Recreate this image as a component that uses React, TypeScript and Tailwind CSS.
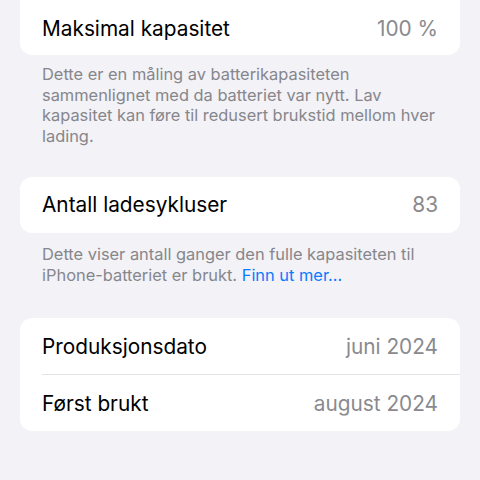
export default function App() {
  return (
    <div
      className="w-[480px] h-[480px] overflow-hidden bg-[#f2f2f7] px-5"
      style={{ fontFamily: 'Inter, "Noto Sans", sans-serif' }}
    >
      {/* Maksimal kapasitet */}
      <div className="h-[55px] rounded-b-xl bg-white flex items-center justify-between px-[22px] pt-[2px]">
        <span className="text-[20.8px] text-black">Maksimal kapasitet</span>
        <span className="text-[20.8px] text-[#8a8a8e]">100 %</span>
      </div>
      <p className="mt-[9px] pl-[22px] text-[16.4px] leading-[20.7px] text-[#86868b] whitespace-nowrap">
        Dette er en måling av batterikapasiteten
        <br />
        sammenlignet med da batteriet var nytt. Lav
        <br />
        kapasitet kan føre til redusert brukstid mellom hver
        <br />
        lading.
      </p>

      {/* Ladesykluser */}
      <div className="mt-[30px] h-14 rounded-xl bg-white flex items-center justify-between px-[22px]">
        <span className="text-[20.8px] text-black">Antall ladesykluser</span>
        <span className="text-[20.8px] text-[#8a8a8e]">83</span>
      </div>
      <p className="mt-[11px] pl-[22px] text-[16.4px] leading-[20.7px] text-[#86868b] whitespace-nowrap">
        Dette viser antall ganger den fulle kapasiteten til
        <br />
        iPhone-batteriet er brukt. <span className="text-[#0a7aff]">Finn ut mer…</span>
      </p>

      {/* Datoer */}
      <div className="mt-[33px] rounded-xl bg-white">
        <div className="h-14 flex items-center justify-between px-[22px]">
          <span className="text-[20.8px] text-black">Produksjonsdato</span>
          <span className="text-[20.8px] text-[#8a8a8e]">juni 2024</span>
        </div>
        <div className="ml-[22px] h-px bg-[#e3e3e8]" />
        <div className="h-14 flex items-center justify-between px-[22px]">
          <span className="text-[20.8px] text-black">Først brukt</span>
          <span className="text-[20.8px] text-[#8a8a8e]">august 2024</span>
        </div>
      </div>
    </div>
  )
}
